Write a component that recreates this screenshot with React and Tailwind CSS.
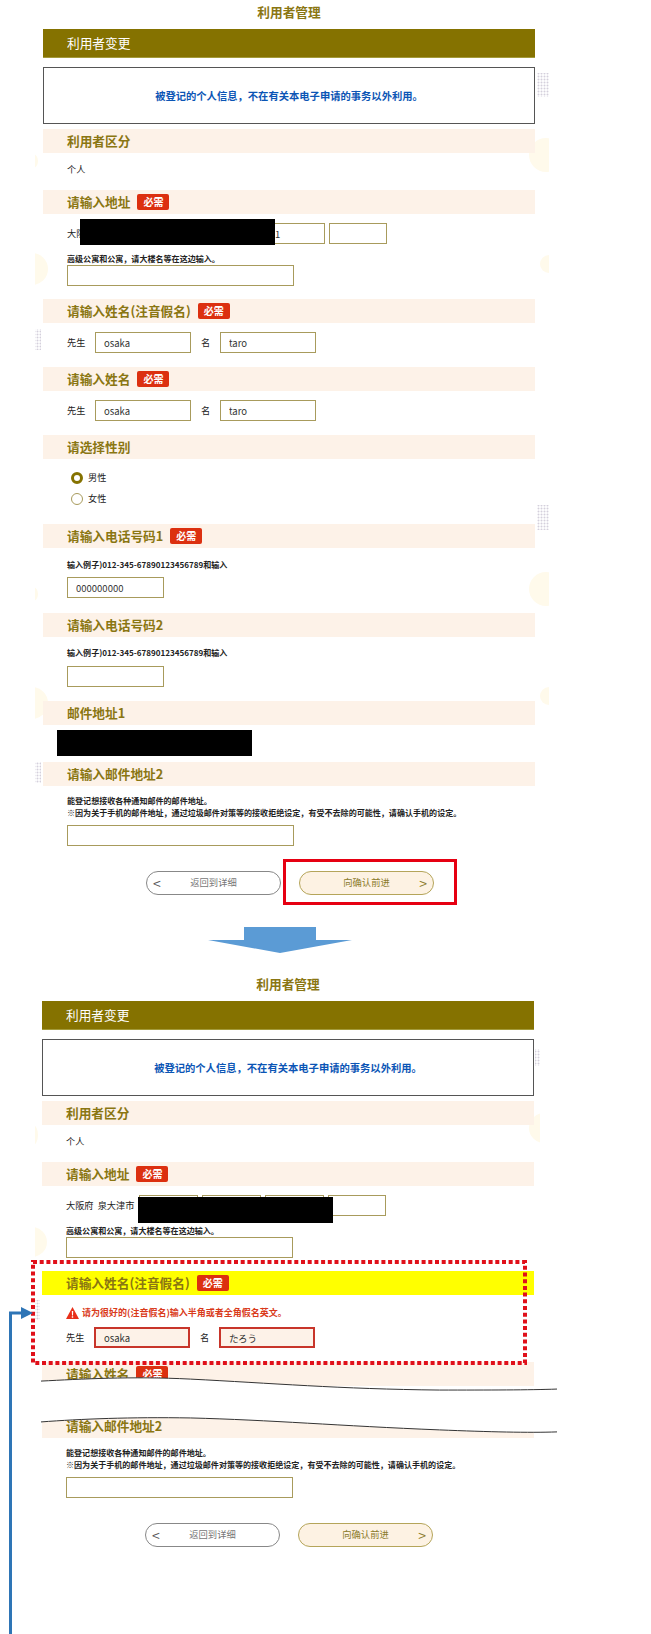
import React from 'react';

const FONT = "font-['Noto_Sans_CJK_SC','Noto_Sans',sans-serif]";

function Section({ title, required, yellow }) {
  return (
    <div className={`h-[24px] flex items-center pl-[24px] gap-[7px] ${yellow ? 'bg-[#ffff00]' : 'bg-[#fdf2e8]'}`}>
      <span className="text-[12.7px] font-bold leading-none text-[#8a7612]">{title}</span>
      {required && (
        <span className="w-[32px] h-[16px] rounded-[2px] bg-[#dc3010] text-white text-[10px] font-bold leading-none flex items-center justify-center">必需</span>
      )}
    </div>
  );
}

function Field({ value = '', width, error }) {
  return (
    <input
      readOnly
      value={value}
      className={`block ${width} h-[21px] pl-[8px] text-[9.5px] text-[#333] outline-none ${error ? 'border-2 border-[#c8352a] bg-[#fdf2e8]' : 'border border-[#a89b5c] bg-white'}`}
    />
  );
}

function NameRow({ first, last, error }) {
  return (
    <div className="flex items-center pl-[24px]">
      <span className="w-[28px] text-[9.2px] text-[#222]">先生</span>
      <Field width="w-[96px]" value={first} error={error} />
      <span className="w-[29px] pl-[10px] text-[9.2px] text-[#222]">名</span>
      <Field width="w-[96px]" value={last} error={error} />
    </div>
  );
}

function Note({ children }) {
  return <p className="text-[8.05px] leading-[12px] font-bold text-[#222]">{children}</p>;
}

function Top() {
  return (
    <>
      <h1 className="h-[16px] mt-[4px] text-center text-[12.7px] leading-[16px] font-bold text-[#8a7612]">利用者管理</h1>
      <div className="h-[29px] mt-[9px] pl-[24px] flex items-center bg-[#857200] border-b border-[#a39a3a] text-white text-[12.7px]">利用者变更</div>
      <div className="h-[57px] mt-[9px] mb-[5px] border border-[#555] bg-white flex items-center justify-center text-[10.3px] font-bold text-[#0b55b5]">
        被登记的个人信息，不在有关本电子申请的事务以外利用。
      </div>
      <Section title="利用者区分" />
      <p className="h-[37px] pl-[24px] pt-[9px] text-[9.2px] leading-[14px] text-[#222]">个人</p>
      <Section title="请输入地址" required />
    </>
  );
}

function AddressBody({ label, redact, lastValue }) {
  return (
    <div className="relative h-[85px] pl-[24px] pt-[9px]">
      <div className="flex items-center">
        <span className="w-[73px] text-[9.2px] text-[#222] whitespace-pre">{label}</span>
        <div className="flex gap-[4px]">
          <Field width="w-[59px]" />
          <Field width="w-[59px]" />
          <Field width="w-[59px]" value={lastValue} />
          <Field width="w-[58px]" />
        </div>
      </div>
      <div className="mt-[9px]">
        <Note>高级公寓和公寓，请大楼名等在这边输入。</Note>
        <Field width="w-[227px]" />
      </div>
      <div className={`absolute bg-black h-[26px] w-[195px] ${redact}`} />
    </div>
  );
}

function Bottom({ boxed }) {
  return (
    <>
      <div className="pl-[24px] pt-[9px] flex flex-col gap-[6px]">
        <Note>
          能登记想接收各种通知邮件的邮件地址。<br />
          ※因为关于手机的邮件地址，通过垃圾邮件对策等的接收拒绝设定，有受不去除的可能性，请确认手机的设定。
        </Note>
        <Field width="w-[227px]" />
      </div>
      <div className="relative flex gap-[18px] pl-[103px] mt-[25px]">
        <div className="relative w-[135px] h-[24px] rounded-full border border-[#888] bg-white flex items-center justify-center text-[9.3px] text-[#777]">
          <span className="absolute left-[6px] text-[14px] leading-none text-[#555]">&lt;</span>
          返回到详细
        </div>
        <div className="relative w-[135px] h-[24px] rounded-full border border-[#b5a55a] bg-[#fdf2e3] flex items-center justify-center text-[9.3px] text-[#8a7a2a]">
          向确认前进
          <span className="absolute right-[6px] text-[14px] leading-none text-[#8a7a2a]">&gt;</span>
        </div>
        {boxed && <div className="absolute left-[240px] -top-[12px] w-[174px] h-[46px] border-[3px] border-[#e60012]" />}
      </div>
    </>
  );
}

// faint page background of the site, showing at the edges of the form
function Decor() {
  return (
    <svg className="absolute left-0 top-0" width="651" height="1634" viewBox="0 0 651 1634">
      <defs>
        <pattern id="dots" width="3" height="3" patternUnits="userSpaceOnUse">
          <circle cx="1.5" cy="1.5" r="1" fill="#d4d0dc" />
        </pattern>
        <clipPath id="clipTop"><rect x="35" y="0" width="514" height="960" /></clipPath>
        <clipPath id="clipBottom"><rect x="35" y="960" width="505" height="674" /></clipPath>
      </defs>
      <g clipPath="url(#clipTop)" fill="#fffaeb">
        <circle cx="546" cy="155" r="17" />
        <ellipse cx="33" cy="161" rx="5" ry="7" />
        <circle cx="32" cy="269" r="16" />
        <circle cx="549" cy="264" r="9" />
        <circle cx="546" cy="589" r="17" />
        <ellipse cx="33" cy="594" rx="5" ry="7" />
        <circle cx="32" cy="703" r="16" />
        <circle cx="549" cy="696" r="9" />
        <rect x="537" y="73" width="12" height="24" fill="url(#dots)" />
        <rect x="537" y="505" width="12" height="25" fill="url(#dots)" />
        <rect x="35" y="329" width="6" height="21" fill="url(#dots)" />
        <rect x="35" y="762" width="6" height="21" fill="url(#dots)" />
      </g>
      <g clipPath="url(#clipBottom)" fill="#fffaeb">
        <circle cx="544" cy="1128" r="15" />
        <ellipse cx="33" cy="1135" rx="5" ry="10" />
        <circle cx="32" cy="1242" r="15" />
        <rect x="535" y="1049" width="5" height="17" fill="url(#dots)" />
        <rect x="35" y="1300" width="5" height="20" fill="url(#dots)" />
      </g>
    </svg>
  );
}

export default function App() {
  return (
    <div className={`relative w-[651px] h-[1634px] overflow-hidden bg-white ${FONT}`}>
      <Decor />

      {/* before */}
      <div className="relative w-[492px] ml-[43px]">
        <Top />
        <AddressBody label="大阪" redact="left-[37px] top-[5px]" lastValue="1" />
        <Section title="请输入姓名(注音假名)" required />
        <div className="h-[44px] pt-[9px]">
          <NameRow first="osaka" last="taro" />
        </div>
        <Section title="请输入姓名" required />
        <div className="h-[44px] pt-[9px]">
          <NameRow first="osaka" last="taro" />
        </div>
        <Section title="请选择性别" />
        <div className="h-[65px] pl-[28px] pt-[8px] text-[9.2px] text-[#222]">
          <label className="h-[21px] flex items-center gap-[5px]">
            <span className="w-[12px] h-[12px] rounded-full border-[3.5px] border-[#857200] bg-white" />男性
          </label>
          <label className="h-[21px] flex items-center gap-[5px]">
            <span className="w-[12px] h-[12px] rounded-full border border-[#a89b5c] bg-white" />女性
          </label>
        </div>
        <Section title="请输入电话号码1" required />
        <div className="h-[65px] pl-[24px] pt-[11px] flex flex-col gap-[6px]">
          <Note>输入例子)012-345-67890123456789和输入</Note>
          <Field width="w-[97px]" value="000000000" />
        </div>
        <Section title="请输入电话号码2" />
        <div className="h-[64px] pl-[24px] pt-[10px] flex flex-col gap-[7px]">
          <Note>输入例子)012-345-67890123456789和输入</Note>
          <Field width="w-[97px]" />
        </div>
        <Section title="邮件地址1" />
        <div className="h-[37px] pl-[14px] pt-[5px]">
          <div className="w-[195px] h-[26px] bg-black" />
        </div>
        <Section title="请输入邮件地址2" />
        <Bottom boxed />
      </div>

      <svg className="relative block ml-[208px] mt-[32px]" width="144" height="26" viewBox="0 0 144 26">
        <path d="M36 0H108V13H144L72 26L0 13H36Z" fill="#5b9bd5" />
      </svg>

      {/* after */}
      <div className="relative w-[492px] ml-[42px] mt-[23px]">
        <Top />
        <AddressBody label={'大阪府  泉大津市'} redact="left-[96px] top-[11px]" />
        <Section title="请输入姓名(注音假名)" required yellow />
        <div className="pl-[24px] pt-[12px] pb-[14px] flex flex-col gap-[8px]">
          <div className="flex items-center gap-[3px] h-[12px] text-[9px] font-bold text-[#d93a1a]">
            <svg width="13" height="12" viewBox="0 0 13 12">
              <path d="M6.5 0L13 12H0Z" fill="#e8301a" />
              <path d="M5.8 4H7.2L7 8.5H6Z M5.8 9.3H7.2V10.7H5.8Z" fill="#fff" />
            </svg>
            请为很好的(注音假名)输入半角或者全角假名英文。
          </div>
          <div className="-ml-[24px]">
            <NameRow first="osaka" last="たろう" error />
          </div>
        </div>
        <div className="relative">
          <Section title="请输入姓名" required />
          <div className="h-[28px]" />
          <Section title="请输入邮件地址2" />
          <svg className="absolute -left-[1px] top-[14px]" width="516" height="58" viewBox="0 0 518 58">
            <path d="M0 5C40 3 90 0 150 3C230 7 300 13 400 14C450 14 490 14 518 13V56C490 57 450 56 400 54C300 50 230 44 150 42C90 41 40 43 0 46Z" fill="#fff" />
            <path d="M0 5C40 3 90 0 150 3C230 7 300 13 400 14C450 14 490 14 518 13" fill="none" stroke="#333" />
            <path d="M0 46C40 43 90 41 150 42C230 44 300 50 400 54C450 56 490 57 518 56" fill="none" stroke="#333" />
          </svg>
        </div>
        <Bottom />
      </div>

      {/* annotations */}
      <svg className="absolute left-[30px] top-[1259px]" width="498" height="107" viewBox="0 0 498 107">
        <rect x="3" y="3" width="492" height="101" fill="none" stroke="#e0101a" strokeWidth="4" strokeDasharray="4 2.7" />
      </svg>
      <svg className="absolute left-[8px] top-[1306px]" width="28" height="328" viewBox="0 0 28 328">
        <path d="M2.5 328V7H15" fill="none" stroke="#2e75b6" strokeWidth="3" />
        <path d="M13 1L25 7L13 13Z" fill="#2e75b6" />
      </svg>
    </div>
  );
}
